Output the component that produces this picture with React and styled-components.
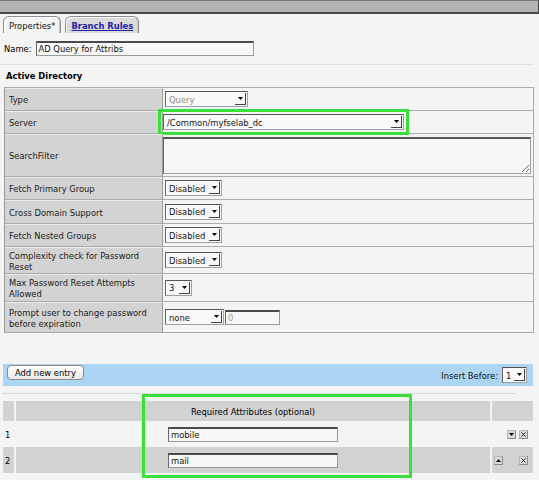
import React from 'react'
import styled, { createGlobalStyle } from 'styled-components'

const GlobalStyle = createGlobalStyle`
  body {
    margin: 0;
    background: #f4f4f4;
    font-family: "DejaVu Sans Condensed", "DejaVu Sans", sans-serif;
    font-size: 9.3px;
    color: #000;
  }
`

const green = '#3ae03a'

const Page = styled.div`
  width: 539px;
  height: 480px;
  overflow: hidden;
`

const TopBar = styled.div`
  height: 11px;
  background: #b3b3b3;
  border-top: 1px solid #7a7a7a;
  border-bottom: 2px solid #4a4a4a;
  border-right: 1px solid #444;
`

const TabStrip = styled.div`
  display: flex;
  gap: 4px;
  margin-top: 2px;
  padding-left: 3px;
  height: 17px;
`

const Tab = styled.div`
  display: flex;
  align-items: center;
  box-sizing: border-box;
  height: 17px;
  padding: 1px 5px 0;
  border: 1px solid #8c8c8c;
  border-bottom: none;
  border-radius: 6px 6px 0 0;
  box-shadow: inset 1px 1px 0 #fff, inset -1px 0 0 #c8c8c8;
  background: ${p => (p.active ? '#f4f4f4' : '#dadada')};
  color: ${p => (p.active ? '#111' : '#2323a6')};
  font-weight: ${p => (p.active ? 'normal' : 'bold')};
  text-decoration: ${p => (p.active ? 'none' : 'underline')};
`

const NameRow = styled.div`
  display: flex;
  align-items: center;
  gap: 4px;
  margin-top: 8px;
  padding-left: 4px;
`

const TextInput = styled.div`
  box-sizing: border-box;
  width: ${p => p.w}px;
  height: 15px;
  line-height: 13px;
  padding-left: 2px;
  border: 1px solid #9a9a9a;
  border-top: 2px solid #4a4a4a;
  border-left-color: #666;
  line-height: 12px;
  background: #f7f7f7;
  color: ${p => (p.muted ? '#999' : '#111')};
`

const Divider = styled.div`
  height: 1px;
  margin: 8px 6px 0 0;
  background: #e0e0e0;
`

const SectionTitle = styled.div`
  font-weight: bold;
  line-height: 11px;
  padding: 5px 0 6px 6px;
`

const Table = styled.div`
  margin-left: 4px;
  width: 530px;
  box-sizing: border-box;
  border-left: 1px solid #9a9a9a;
  border-right: 1px solid #a8a8a8;
  border-bottom: 1px solid #a8a8a8;
`

const Row = styled.div`
  display: grid;
  grid-template-columns: 158px 1fr;
  box-sizing: border-box;
  height: ${p => p.h}px;
  border-top: 1px solid #ababab;
`

const Label = styled.div`
  display: flex;
  align-items: center;
  padding: 0 8px 0 4px;
  line-height: 11px;
  color: #1a1a1a;
  background: #d3d3d3;
  border-right: 1px solid #9a9a9a;
  border-top: 1px solid #ececec;
`

const Value = styled.div`
  display: flex;
  align-items: center;
  gap: 1px;
  padding-left: ${p => (p.tight ? 0 : 2)}px;
`

const SelectBox = styled.div`
  display: inline-flex;
  align-items: center;
  justify-content: space-between;
  box-sizing: border-box;
  width: ${p => p.w}px;
  height: 16px;
  padding-left: 3px;
  border: 1px solid #a0a0a0;
  border-top-color: #555;
  border-left-color: #666;
  background: #f9f9f9;
  color: ${p => (p.muted ? '#8a8a8a' : '#111')};
  outline: ${p => (p.mark ? `3px solid ${green}` : 'none')};
  outline-offset: 2px;
`

const ArrowBox = styled.span`
  display: flex;
  align-items: center;
  justify-content: center;
  width: 10px;
  height: 11px;
  margin-right: 1px;
  border-right: 1px solid #444;
  border-bottom: 1px solid #444;
`

const Area = styled.textarea`
  box-sizing: border-box;
  width: 368px;
  height: 37px;
  margin: 0;
  border: 1px solid #a0a0a0;
  border-top: 2px solid #555;
  border-left-color: #666;
  background: #f7f7f7;
  resize: both;
  font: inherit;
`

const BlueBar = styled.div`
  display: flex;
  justify-content: space-between;
  align-items: flex-start;
  box-sizing: border-box;
  margin: 31px 0 0 3px;
  width: 530px;
  height: 22px;
  padding: 1px 6px 0 4px;
  background: #acd5f3;
`

const Button = styled.div`
  display: flex;
  align-items: center;
  box-sizing: border-box;
  height: 15px;
  padding: 0 7px;
  border: 1px solid #8a8a8a;
  border-radius: 4px;
  background: linear-gradient(#ffffff, #e9e9e9);
`

const InsertGroup = styled.div`
  display: flex;
  align-items: center;
  gap: 4px;
  margin-top: 2px;
  color: #111;
`

const AttrSection = styled.div`
  position: relative;
  margin-top: 7px;
`

const Dotted = styled.div`
  margin-left: 3px;
  width: 512px;
  border-top: 1px dotted #bdbdbd;
`

const AttrTable = styled.div`
  margin: 7px 0 0 3px;
  width: 530px;
`

const AttrRow = styled.div`
  display: grid;
  grid-template-columns: 11px 1fr 41px;
  column-gap: 2px;
  height: ${p => p.h}px;
`

const Cell = styled.div`
  display: flex;
  align-items: center;
  justify-content: ${p => (p.center ? 'center' : 'flex-start')};
  padding-left: ${p => p.pad || 0}px;
  background: ${p => (p.shade ? '#d2d2d2' : 'transparent')};
`

const IconSlot = styled.div`
  display: flex;
  align-items: center;
  justify-content: center;
  box-sizing: border-box;
  width: 9px;
  height: 9px;
  margin-right: 3.5px;
  border: 1px solid #8a8a8a;
  border-top-color: #b8b8b8;
  border-left-color: #b8b8b8;
  background: #d9d9d9;
  visibility: ${p => (p.hide ? 'hidden' : 'visible')};
`

const Highlight = styled.div`
  position: absolute;
  left: 142px;
  top: 1px;
  width: 270px;
  height: 84px;
  box-sizing: border-box;
  border: 3px solid ${green};
  pointer-events: none;
`

const Tri = ({ up }) => (
  <svg width="5" height="3" viewBox="0 0 5 3">
    <path d={up ? 'M0 3 L2.5 0 L5 3 Z' : 'M0 0 L5 0 L2.5 3 Z'} fill="#000" />
  </svg>
)

const Cross = () => (
  <svg width="5" height="5" viewBox="0 0 5 5">
    <path d="M0.5 0.5 L4.5 4.5 M4.5 0.5 L0.5 4.5" stroke="#222" strokeWidth="1" />
  </svg>
)

const Select = ({ w, children, muted, mark }) => (
  <SelectBox w={w} muted={muted} mark={mark}>
    <span>{children}</span>
    <ArrowBox><Tri /></ArrowBox>
  </SelectBox>
)

const attributes = [
  { n: 1, value: 'mobile', up: false, down: true },
  { n: 2, value: 'mail', up: true, down: false }
]

export default function App() {
  return (
    <Page>
      <GlobalStyle />
      <TopBar />
      <TabStrip>
        <Tab active>Properties*</Tab>
        <Tab>Branch Rules</Tab>
      </TabStrip>
      <NameRow>
        <span>Name:</span>
        <TextInput w={218}>AD Query for Attribs</TextInput>
      </NameRow>
      <Divider />
      <SectionTitle>Active Directory</SectionTitle>
      <Table>
        <Row h={23}>
          <Label>Type</Label>
          <Value><Select w={83} muted>Query</Select></Value>
        </Row>
        <Row h={23}>
          <Label>Server</Label>
          <Value tight><Select w={241} mark>/Common/myfselab_dc</Select></Value>
        </Row>
        <Row h={43}>
          <Label>SearchFilter</Label>
          <Value tight><Area /></Value>
        </Row>
        <Row h={23}>
          <Label>Fetch Primary Group</Label>
          <Value><Select w={57}>Disabled</Select></Value>
        </Row>
        <Row h={24}>
          <Label>Cross Domain Support</Label>
          <Value><Select w={57}>Disabled</Select></Value>
        </Row>
        <Row h={23}>
          <Label>Fetch Nested Groups</Label>
          <Value><Select w={57}>Disabled</Select></Value>
        </Row>
        <Row h={27}>
          <Label>Complexity check for Password Reset</Label>
          <Value><Select w={57}>Disabled</Select></Value>
        </Row>
        <Row h={28}>
          <Label>Max Password Reset Attempts Allowed</Label>
          <Value><Select w={27}>3</Select></Value>
        </Row>
        <Row h={31}>
          <Label>Prompt user to change password before expiration</Label>
          <Value>
            <Select w={59}>none</Select>
            <TextInput w={55} muted>0</TextInput>
          </Value>
        </Row>
      </Table>

      <BlueBar>
        <Button>Add new entry</Button>
        <InsertGroup>
          <span>Insert Before:</span>
          <Select w={25}>1</Select>
        </InsertGroup>
      </BlueBar>

      <AttrSection>
        <Dotted />
        <AttrTable>
          <AttrRow h={20}>
            <Cell shade />
            <Cell shade center>Required Attributes (optional)</Cell>
            <Cell shade />
          </AttrRow>
          {attributes.map(a => (
            <AttrRow h={26} key={a.n}>
              <Cell shade={a.n % 2 === 0} pad={2}>{a.n}</Cell>
              <Cell shade={a.n % 2 === 0} center>
                <TextInput w={170}>{a.value}</TextInput>
              </Cell>
              <Cell shade={a.n % 2 === 0} pad={2}>
                <IconSlot hide={!a.up}><Tri up /></IconSlot>
                <IconSlot hide={!a.down}><Tri /></IconSlot>
                <IconSlot><Cross /></IconSlot>
              </Cell>
            </AttrRow>
          ))}
        </AttrTable>
        <Highlight />
      </AttrSection>
    </Page>
  )
}
